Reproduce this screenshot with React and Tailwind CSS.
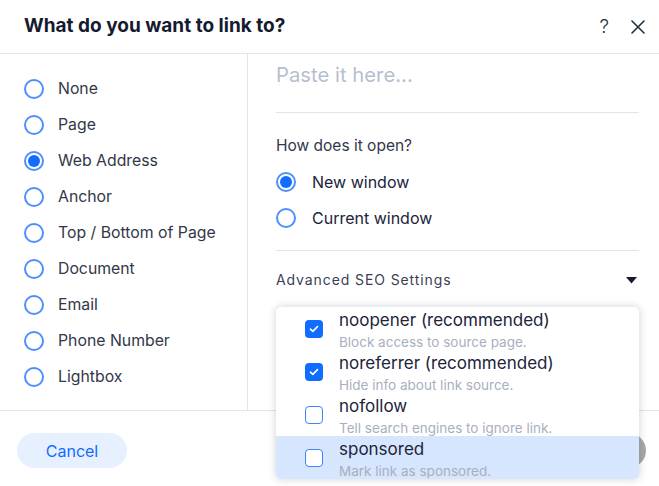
import React from 'react';

const linkTypes = [
  'None',
  'Page',
  'Web Address',
  'Anchor',
  'Top / Bottom of Page',
  'Document',
  'Email',
  'Phone Number',
  'Lightbox',
];

const relOptions = [
  { label: 'noopener (recommended)', desc: 'Block access to source page.', checked: true },
  { label: 'noreferrer (recommended)', desc: 'Hide info about link source.', checked: true },
  { label: 'nofollow', desc: 'Tell search engines to ignore link.', checked: false },
  { label: 'sponsored', desc: 'Mark link as sponsored.', checked: false, hover: true },
];

function Radio({ checked }) {
  return (
    <span className="flex h-5 w-5 shrink-0 items-center justify-center rounded-full border-2 border-[#4f8ffd] bg-white">
      {checked && <span className="h-3 w-3 rounded-full bg-[#116dff]" />}
    </span>
  );
}

function Checkbox({ checked }) {
  if (checked) {
    return (
      <span className="flex h-[18px] w-[18px] shrink-0 items-center justify-center rounded-[4px] bg-[#116dff]">
        <svg width="10" height="8" viewBox="0 0 10 8" fill="none">
          <path d="M1.5 4.2l2.3 2.2L8.5 1.6" stroke="white" strokeWidth="1.6" strokeLinecap="round" strokeLinejoin="round" />
        </svg>
      </span>
    );
  }
  return <span className="h-[18px] w-[18px] shrink-0 rounded-[4px] border border-[#3f82ff] bg-white" />;
}

export default function App() {
  return (
    <div className="relative h-[486px] w-[659px] overflow-hidden bg-white font-['Inter','Liberation_Sans',sans-serif] text-[#32374a]">
      {/* header */}
      <div className="flex h-[54px] items-center justify-between border-b border-[#dfe5eb] pl-6 pr-[14px]">
        <h1 className="text-[19px] font-bold text-[#161a2f]">What do you want to link to?</h1>
        <div className="flex items-center gap-[22px] text-[#20303c]">
          <span className="text-[19px] font-light leading-none">?</span>
          <svg width="14" height="14" viewBox="0 0 14 14" fill="none">
            <path d="M1 1l12 12M13 1L1 13" stroke="#20303c" strokeWidth="1.6" strokeLinecap="round" />
          </svg>
        </div>
      </div>

      {/* body */}
      <div className="flex h-[356px]">
        <div className="w-[248px] shrink-0 border-r border-[#dfe5eb] px-6 pt-[17px]">
          {linkTypes.map((t) => (
            <div key={t} className="flex h-9 items-center gap-[14px]">
              <Radio checked={t === 'Web Address'} />
              <span className="text-[15.8px]">{t}</span>
            </div>
          ))}
        </div>

        <div className="flex-1 pl-7 pr-5">
          <div className="h-[59px] border-b border-[#dfe5eb] pt-[9px] text-[20.3px] leading-[24px] text-[#b6bfd0]">
            Paste it here...
          </div>
          <div className="mt-[23px] text-[15.5px] leading-5">How does it open?</div>
          <div className="mt-2">
            {['New window', 'Current window'].map((o, i) => (
              <div key={o} className="flex h-9 items-center gap-4">
                <Radio checked={i === 0} />
                <span className="text-[16px] text-[#20243a]">{o}</span>
              </div>
            ))}
          </div>
          <div className="mt-[14px] border-t border-[#dfe5eb]" />
          <div className="mt-[19px] flex items-center justify-between pr-[2px]">
            <span className="text-[14px] leading-5 tracking-[0.9px] text-[#3b4057]">Advanced SEO Settings</span>
            <svg width="11" height="7" viewBox="0 0 11 7">
              <path d="M0 0h11L5.5 6.5z" fill="#161a2f" />
            </svg>
          </div>
        </div>
      </div>

      {/* footer */}
      <div className="flex h-[76px] items-start justify-between border-t border-[#dfe5eb] pl-[17px] pr-[13px] pt-[22px]">
        <button className="h-[35px] w-[110px] rounded-full bg-[#e7f0ff] text-[16px] text-[#116dff]">Cancel</button>
        <button className="h-[35px] w-[84px] rounded-full bg-[#a8a8a8] text-[16px] text-white">Done</button>
      </div>

      {/* rel dropdown */}
      <div className="absolute left-[276px] top-[307px] h-[172px] w-[363px] overflow-hidden rounded-[5px] bg-white shadow-[0_0_8px_rgba(22,45,61,0.22)]">
        {relOptions.map((o) => (
          <div key={o.label} className={`flex h-[43px] items-center gap-4 pl-[29px] ${o.hover ? 'bg-[#d6e6fe]' : ''}`}>
            <Checkbox checked={o.checked} />
            <div className="flex h-[43px] flex-col pt-[2px]">
              <span className="text-[17px] leading-[22px] text-[#20243a]">{o.label}</span>
              <span className="mt-[3px] text-[13.5px] leading-4 text-[#a8afbf]">{o.desc}</span>
            </div>
          </div>
        ))}
      </div>
    </div>
  );
}
